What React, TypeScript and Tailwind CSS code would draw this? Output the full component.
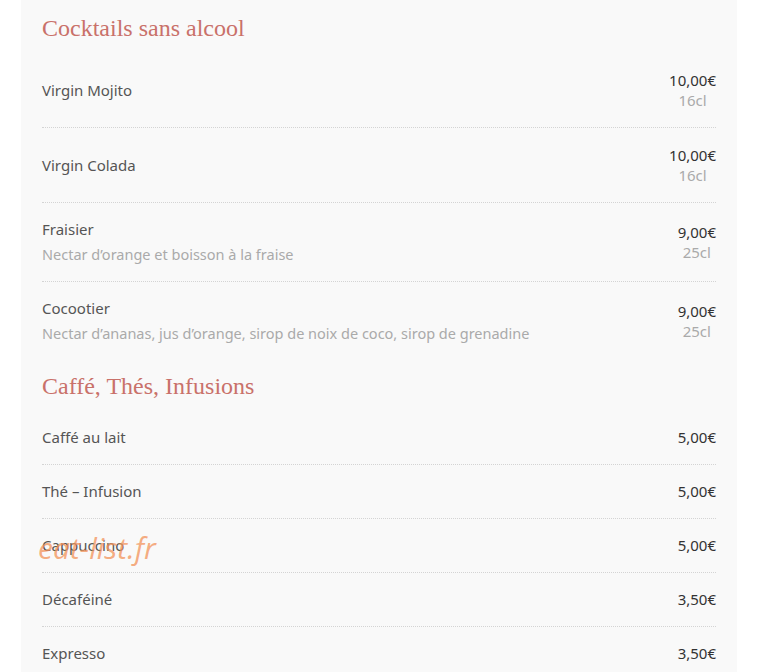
import React from "react";

type Item = {
  name: string;
  desc?: string;
  price: string;
  size?: string;
};

const cocktails: Item[] = [
  { name: "Virgin Mojito", price: "10,00€", size: "16cl" },
  { name: "Virgin Colada", price: "10,00€", size: "16cl" },
  {
    name: "Fraisier",
    desc: "Nectar d’orange et boisson à la fraise",
    price: "9,00€",
    size: "25cl",
  },
  {
    name: "Cocootier",
    desc: "Nectar d’ananas, jus d’orange, sirop de noix de coco, sirop de grenadine",
    price: "9,00€",
    size: "25cl",
  },
];

const cafes: Item[] = [
  { name: "Caffé au lait", price: "5,00€" },
  { name: "Thé – Infusion", price: "5,00€" },
  { name: "Cappuccino", price: "5,00€" },
  { name: "Décaféiné", price: "3,50€" },
  { name: "Expresso", price: "3,50€" },
];

const Heading = ({ children }: { children: string }) => (
  <h2 className="h-[51px] flex items-center text-[24px] text-[#c9716a] font-['Liberation_Serif',serif]">
    {children}
  </h2>
);

const Row = ({ item, last }: { item: Item; last: boolean }) => {
  const border = last ? "" : "border-b border-dotted border-[#d4d4d4]";
  if (!item.size) {
    return (
      <div className={`flex items-center justify-between py-[15px] leading-[23px] ${border}`}>
        <span className="text-[15px] text-[#555]">{item.name}</span>
        <span className="text-[15px] text-[#333]">{item.price}</span>
      </div>
    );
  }
  return (
    <div className={`flex items-center justify-between py-[14px] ${border}`}>
      <div className="flex flex-col">
        <span className="text-[15px] leading-[25px] text-[#555]">{item.name}</span>
        {item.desc && (
          <span className="text-[14.5px] leading-[25px] text-[#aaa]">{item.desc}</span>
        )}
      </div>
      <div className="h-[46px] flex flex-col justify-center text-center text-[15px] leading-[20px]">
        <span className="text-[#333]">{item.price}</span>
        <span className="text-[#aaa]">{item.size}</span>
      </div>
    </div>
  );
};

const App = () => {
  return (
    <main className="relative min-h-screen bg-white font-['Noto_Sans',sans-serif]">
      <section className="ml-[21px] w-[716px] bg-[#f9f9f9] px-[21px] pt-[2px] pb-10">
        <Heading>Cocktails sans alcool</Heading>
        {cocktails.map((it, i) => (
          <Row key={it.name} item={it} last={i === cocktails.length - 1} />
        ))}
        <Heading>Caffé, Thés, Infusions</Heading>
        {cafes.map((it, i) => (
          <Row key={it.name} item={it} last={i === cafes.length - 1} />
        ))}
      </section>
      <span className="absolute left-[38px] top-[525px] text-[30px] italic text-[#f3935a]/75 font-['Open_Sans',sans-serif] pointer-events-none">
        eat-list.fr
      </span>
    </main>
  );
};

export default App;
